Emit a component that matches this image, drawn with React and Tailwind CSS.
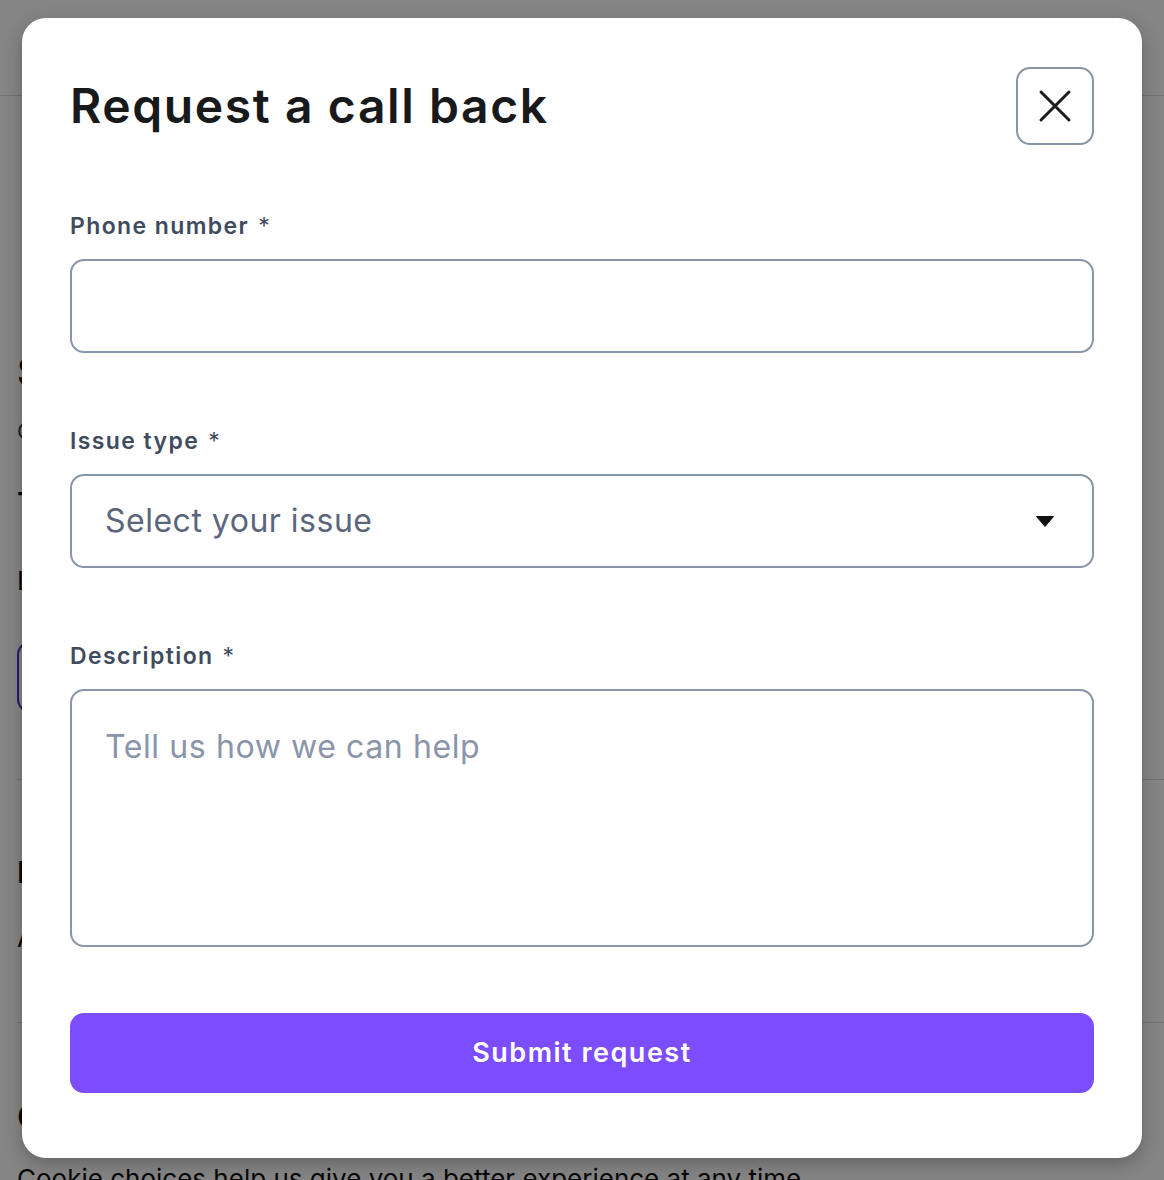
import React from "react";

const font = { fontFamily: "Inter, 'Noto Sans', sans-serif" };

function Background() {
  return (
    <div className="absolute inset-0 bg-white text-[#111]" style={font}>
      <div className="h-[96px] border-b border-[#d8dce3]" />
      <div className="pl-[17px]">
        <div className="mt-[252px] text-[40px] font-semibold leading-[48px] whitespace-nowrap">Support centre</div>
        <div className="mt-[20px] text-[22px] leading-[30px] text-[#334155] whitespace-nowrap">Contact options available</div>
        <div className="mt-[37px] text-[30px] font-semibold leading-[40px] whitespace-nowrap">Talk to us</div>
        <div className="mt-[40px] text-[26px] leading-[36px] whitespace-nowrap flex justify-between w-[1180px]">
          <span>Lorem ipsum dolor</span>
          <span>nc</span>
        </div>
        <div className="mt-[42px] h-[72px] w-[300px] rounded-[14px] border-2 border-[#4c2fd0]" />
      </div>
      <div className="mt-[66px] ml-[16px] border-t border-[#d8dce3]" />
      <div className="pl-[17px]">
        <div className="mt-[72px] text-[30px] font-semibold leading-[40px] whitespace-nowrap">Information</div>
        <div className="mt-[28px] text-[26px] leading-[36px] whitespace-nowrap flex justify-between w-[1180px]">
          <span>A friendly team</span>
          <span>y</span>
        </div>
      </div>
      <div className="mt-[66px] ml-[16px] border-t border-[#d8dce3]" />
      <div className="pl-[17px]">
        <div className="mt-[72px] text-[34px] font-semibold leading-[44px] whitespace-nowrap">Contact</div>
        <div className="mt-[22px] text-[26px] leading-[36px] whitespace-nowrap">Cookie choices help us give you a better experience at any time.</div>
      </div>
    </div>
  );
}

function Label({ children }) {
  return (
    <div className="flex items-center text-[23px] leading-[30px] font-semibold tracking-[1.4px] text-[#414b5f]">
      <span>{children}</span>
      <span className="ml-[9px] font-normal tracking-normal text-[#414b5f]">*</span>
    </div>
  );
}

export default function App() {
  return (
    <div className="relative h-[1180px] w-full overflow-hidden" style={font}>
      <Background />
      <div className="absolute inset-0 bg-black/[0.48]" />
      <div className="absolute left-[22px] top-[18px] w-[1120px] h-[1140px] rounded-[24px] bg-white shadow-[0_6px_18px_rgba(0,0,0,0.25)] px-[48px] pt-[49px]">
        <div className="flex items-center justify-between">
          <h1 className="text-[48px] leading-[78px] font-semibold tracking-[1.6px] text-[#18191b]">Request a call back</h1>
          <button className="flex h-[78px] w-[78px] items-center justify-center rounded-[14px] border-2 border-[#8a94a8] bg-white">
            <svg width="36" height="36" viewBox="0 0 36 36" fill="none" stroke="#1b1c1e" strokeWidth="3" strokeLinecap="round">
              <path d="M4 4L32 32M32 4L4 32" />
            </svg>
          </button>
        </div>

        <div className="mt-[66px]">
          <Label>Phone number</Label>
          <div className="mt-[18px] h-[94px] rounded-[14px] border-2 border-[#8a94aa]" />
        </div>

        <div className="mt-[73px]">
          <Label>Issue type</Label>
          <div className="mt-[18px] h-[94px] rounded-[14px] border-2 border-[#8a94aa] flex items-center justify-between pl-[33px] pr-[38px]">
            <span className="text-[32px] tracking-[0.5px] text-[#5b667c]">Select your issue</span>
            <svg width="18" height="11" viewBox="0 0 18 11">
              <path d="M0.5 0.5H17.5L9 10.5Z" fill="#111" stroke="#111" strokeLinejoin="round" />
            </svg>
          </div>
        </div>

        <div className="mt-[73px]">
          <Label>Description</Label>
          <div className="mt-[18px] h-[258px] rounded-[14px] border-2 border-[#8a94aa] pl-[33px] pt-[34px]">
            <span className="text-[32px] leading-[44px] tracking-[0.6px] text-[#8a94aa]">Tell us how we can help</span>
          </div>
        </div>

        <button className="mt-[66px] flex h-[80px] w-full items-center justify-center rounded-[14px] bg-[#7c4dff] text-[27px] font-semibold tracking-[1.5px] text-white">
          Submit request
        </button>
      </div>
    </div>
  );
}
